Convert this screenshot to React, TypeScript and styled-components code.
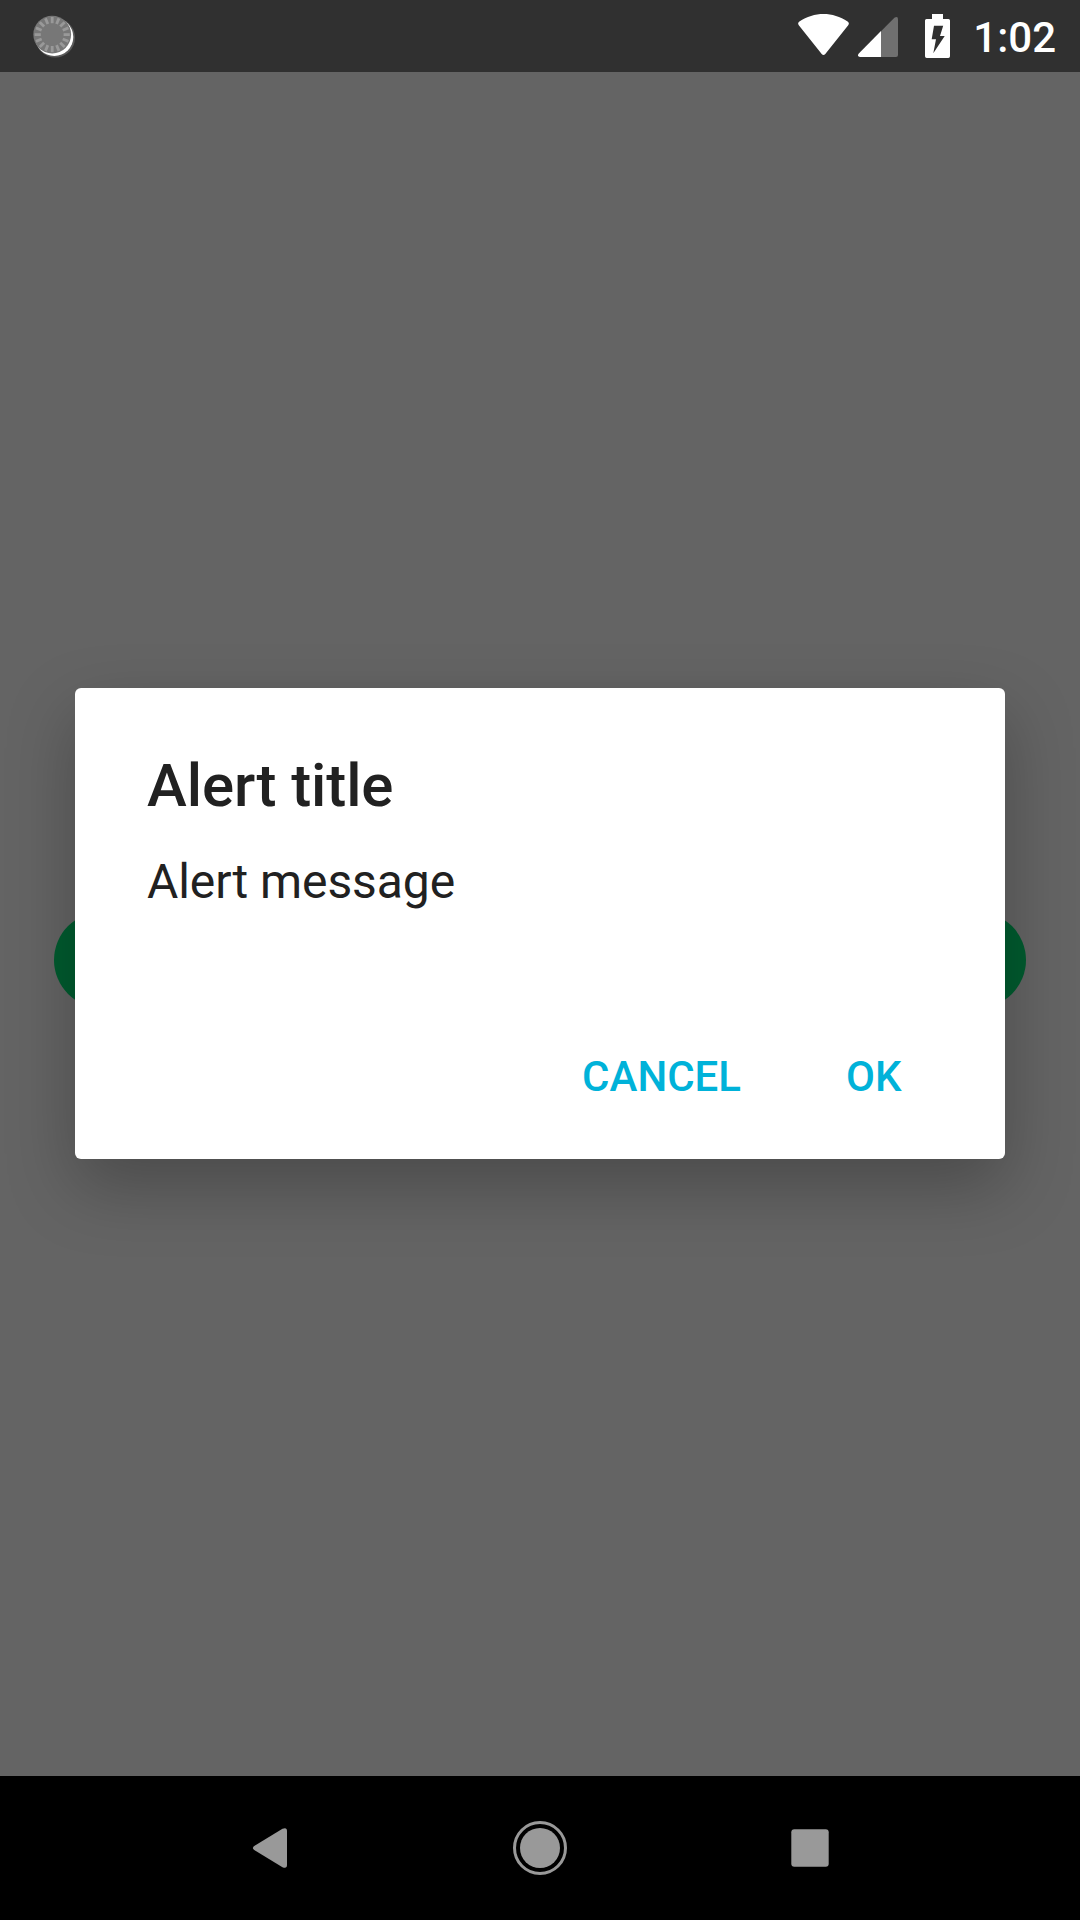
import React from "react";
import styled, { createGlobalStyle } from "styled-components";

const GlobalStyle = createGlobalStyle`
  * { box-sizing: border-box; }
  html, body { margin: 0; padding: 0; background: #000; }
`;

const Screen = styled.div`
  position: relative;
  display: flex;
  flex-direction: column;
  width: 1080px;
  height: 1920px;
  overflow: hidden;
  background: #646464;
  font-family: Roboto, "Noto Sans", sans-serif;
`;

const StatusBar = styled.header`
  display: flex;
  align-items: center;
  height: 72px;
  flex: none;
  padding: 0 24px 0 28px;
  background: #303030;
`;

const StatusIcons = styled.div`
  display: flex;
  align-items: center;
  margin-left: auto;
`;

const Glyph = styled.svg<{ $gap?: number }>`
  display: block;
  flex: none;
  margin-right: ${(p) => p.$gap ?? 0}px;
`;

const Clock = styled.time`
  width: 105px;
  font-size: 42px;
  font-weight: 500;
  line-height: 50px;
  text-align: right;
  color: #fff;
  padding-top: 3px;
`;

const Content = styled.main`
  flex: 1;
  display: flex;
  align-items: center;
  padding: 72px 54px 0;
`;

const PageButton = styled.div`
  width: 100%;
  height: 96px;
  border-radius: 48px;
  background: #005b2f;
`;

const Overlay = styled.div`
  position: absolute;
  inset: 72px 0 144px;
  display: flex;
  justify-content: center;
  align-items: flex-start;
  padding-top: 616px;
`;

const Dialog = styled.section`
  display: flex;
  flex-direction: column;
  width: 930px;
  height: 471px;
  padding: 63px 72px 0;
  border-radius: 6px;
  background: #fff;
  box-shadow: 0 27px 68px rgba(0, 0, 0, 0.26);
`;

const Title = styled.h1`
  margin: 0;
  font-size: 60px;
  font-weight: 500;
  line-height: 70px;
  letter-spacing: -0.1px;
  color: #212121;
`;

const Message = styled.p`
  margin: 33px 0 0;
  font-size: 48px;
  font-weight: 400;
  line-height: 56px;
  letter-spacing: -0.08px;
  color: #212121;
`;

const Actions = styled.div`
  display: flex;
  justify-content: flex-end;
  gap: 57px;
  margin-top: 118px;
  padding-right: 7.5px;
`;

const ActionButton = styled.button`
  border: 0;
  padding: 24px;
  background: none;
  font-family: inherit;
  font-size: 42px;
  font-weight: 500;
  line-height: 50px;
  color: #00b2d9;
`;

const NavBar = styled.nav`
  display: flex;
  justify-content: center;
  align-items: center;
  flex: none;
  height: 144px;
  background: #000;
`;

const NavKey = styled.div`
  display: flex;
  justify-content: center;
  width: 270px;
`;

const SPOKES = Array.from({ length: 16 }, (_, i) => i * 22.5);

const SyncIcon = () => (
  <Glyph width="50" height="54" viewBox="28 8 50 54">
    <circle cx="55.2" cy="36.7" r="19.8" fill="#777" opacity="0.6" />
    <circle cx="54.3" cy="36" r="19" fill="#fff" />
    <circle cx="52.2" cy="33.6" r="18.9" fill="#777" />
    {SPOKES.map((a) => (
      <line key={a} x1="52.2" y1="16" x2="52.2" y2="22.2" stroke="#999" strokeWidth="2.8" transform={`rotate(${a} 52.2 33.6)`} />
    ))}
  </Glyph>
);

const WifiIcon = () => (
  <Glyph $gap={8} width="52" height="72" viewBox="798 0 52 72">
    <path d="M798.8 25.2 Q797.2 23.2 799.4 21.6 C814 11.4 833 11.4 847.6 21.6 Q849.8 23.2 848.2 25.2 L825.3 54 Q823.5 56 821.7 54 Z" fill="#fff" />
  </Glyph>
);

const SignalIcon = () => (
  <Glyph $gap={27} width="40" height="72" viewBox="858 0 40 72">
    <path d="M881 31.2 L894.4 17.8 Q898 15.6 898 19.5 V55 Q898 57 896 57 H881 Z" fill="#707070" />
    <path d="M881 31 V57 H860 Q856.6 56.4 858.8 53.4 Z" fill="#fff" />
  </Glyph>
);

const BatteryIcon = () => (
  <Glyph width="26" height="72" viewBox="925 0 26 72">
    <path fillRule="evenodd" d="M932 14 H943 V19 H948.5 Q950 19 950 20.5 V56.3 Q950 58 948.3 58 H926.7 Q925 58 925 56.3 V20.5 Q925 19 926.5 19 H932 Z M934 25.7 L931.7 39.3 H936 L933.3 53.3 L944.7 36 H940 L943.2 25.7 Z" fill="#fff" />
  </Glyph>
);

export default function App() {
  return (
    <>
      <GlobalStyle />
      <Screen>
        <StatusBar>
          <SyncIcon />
          <StatusIcons>
            <WifiIcon />
            <SignalIcon />
            <BatteryIcon />
            <Clock>1:02</Clock>
          </StatusIcons>
        </StatusBar>
        <Content>
          <PageButton />
        </Content>
        <NavBar>
          <NavKey>
            <svg width="60" height="60" viewBox="240 1818 60 60">
              <path d="M254.2 1846 L282.5 1828.8 Q287 1827 287 1831 V1865 Q287 1869 282.5 1867.2 L254.2 1850 Q251.6 1848 254.2 1846 Z" fill="#999" />
            </svg>
          </NavKey>
          <NavKey>
            <svg width="60" height="60" viewBox="0 0 60 60">
              <circle cx="30" cy="30" r="25.5" fill="none" stroke="#999" strokeWidth="3" />
              <circle cx="30" cy="30" r="20" fill="#999" />
            </svg>
          </NavKey>
          <NavKey>
            <svg width="60" height="60" viewBox="0 0 60 60">
              <rect x="11.3" y="11.3" width="37.4" height="37.4" rx="3" fill="#999" />
            </svg>
          </NavKey>
        </NavBar>
        <Overlay>
          <Dialog role="dialog">
            <Title>Alert title</Title>
            <Message>Alert message</Message>
            <Actions>
              <ActionButton>CANCEL</ActionButton>
              <ActionButton>OK</ActionButton>
            </Actions>
          </Dialog>
        </Overlay>
      </Screen>
    </>
  );
}
